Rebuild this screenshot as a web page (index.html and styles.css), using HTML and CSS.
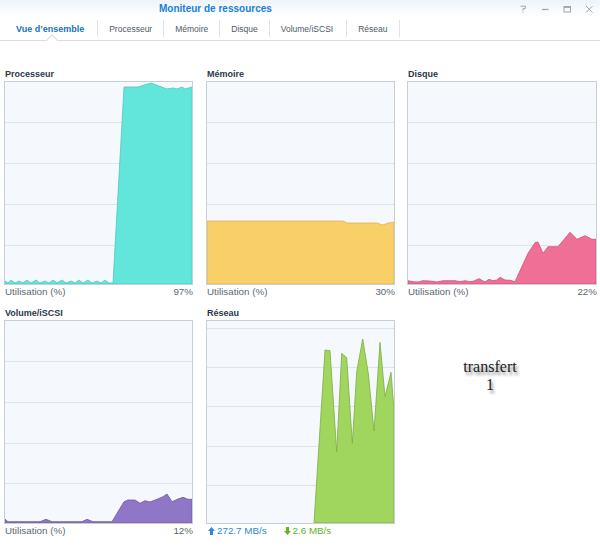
FILE: index.html
```html
<!DOCTYPE html>
<html lang="fr">
<head>
<meta charset="utf-8">
<title>Moniteur de ressources</title>
<link rel="stylesheet" href="styles.css">
</head>
<body>
<div class="window">
  <header class="titlebar">
    <div class="title">Moniteur de ressources</div>
    <div class="controls">
      <svg class="ctl" viewBox="0 0 8 8"><path d="M1.5 1.2 H6.3 V3.6 H4 V5.6 M4 6.6 V7.6" fill="none" stroke="currentColor" stroke-width="1"/></svg>
      <svg class="ctl" viewBox="0 0 8 8"><path d="M1 4.5 H7.5" stroke="currentColor" stroke-width="1.2"/></svg>
      <svg class="ctl" viewBox="0 0 8 8"><rect x="1" y="1.5" width="6.5" height="5.5" fill="none" stroke="currentColor" stroke-width="1"/><path d="M1 2.2 H7.5" stroke="currentColor" stroke-width="1.4"/></svg>
      <svg class="ctl" viewBox="0 0 8 8"><path d="M1 1 L7.5 7.5 M7.5 1 L1 7.5" stroke="currentColor" stroke-width="1"/></svg>
    </div>
  </header>

  <nav class="tabs">
    <span class="tab active">Vue d’ensemble</span>
    <span class="tab">Processeur</span>
    <span class="tab">Mémoire</span>
    <span class="tab">Disque</span>
    <span class="tab vol-tab">Volume/iSCSI</span>
    <span class="tab">Réseau</span>
  </nav>

  <main class="grid">
    <section class="panel">
      <h2 class="label">Processeur</h2>
      <div class="chart">
        <svg viewBox="0 0 187 202" preserveAspectRatio="none">
          <g class="grid-lines"><path d="M0 40.5H187M0 81.5H187M0 122.5H187M0 163.5H187"/></g>
          <path class="area cpu" d="M0,202 L0,199 L3,201 L6,198 L10,201 L14,199 L18,201 L22,198 L26,201 L31,198 L35,201 L40,199 L44,201 L48,198 L52,201 L57,198 L61,201 L66,199 L70,201 L74,198 L78,201 L83,198 L87,201 L92,199 L96,201 L100,198 L104,201 L108,201 L119,5 L133,5 L146,1 L162,7 L168,6 L172,7 L177,5 L180,7 L187,5 L187,202 Z"/>
        </svg>
      </div>
      <div class="foot"><span>Utilisation (%)</span><span>97%</span></div>
    </section>

    <section class="panel">
      <h2 class="label">Mémoire</h2>
      <div class="chart">
        <svg viewBox="0 0 187 202" preserveAspectRatio="none">
          <g class="grid-lines"><path d="M0 40.5H187M0 81.5H187M0 122.5H187M0 163.5H187"/></g>
          <path class="area mem" d="M0,202 L0,139 L136,139 L140,141 L170,141 L176,143 L181,141 L187,140 L187,202 Z"/>
        </svg>
      </div>
      <div class="foot"><span>Utilisation (%)</span><span>30%</span></div>
    </section>

    <section class="panel wide">
      <h2 class="label">Disque</h2>
      <div class="chart">
        <svg viewBox="0 0 188 202" preserveAspectRatio="none">
          <g class="grid-lines"><path d="M0 40.5H188M0 81.5H188M0 122.5H188M0 163.5H188"/></g>
          <path class="area disk" d="M0,202 L0,198.7 L5,199.7 L10,200 L15,198.7 L22,199 L29,200 L35,198.7 L47,198.7 L52,199.7 L57,198.7 L62,199.7 L65,199.3 L71,196.7 L77,200 L81,197.3 L85,198.7 L89,198 L92,195.3 L97,198 L102,198.3 L107,199.7 L120,171.3 L127,160.7 L130,160 L135,171.3 L140,164.7 L150,164.7 L162,150.3 L169,157.3 L177,153.7 L184,157.3 L188,157.3 L188,202 Z"/>
        </svg>
      </div>
      <div class="foot"><span>Utilisation (%)</span><span>22%</span></div>
    </section>

    <section class="panel">
      <h2 class="label">Volume/iSCSI</h2>
      <div class="chart">
        <svg viewBox="0 0 187 202" preserveAspectRatio="none">
          <g class="grid-lines"><path d="M0 40.5H187M0 81.5H187M0 122.5H187M0 162.5H187"/></g>
          <path class="area vol" d="M0,202 L0,198.3 L3,200.7 L35,200.7 L41,198.3 L47,200.7 L77,200.7 L82,198.3 L88,200.7 L107,200.7 L119,180.7 L123,179 L130,179 L135,182.3 L140,179.7 L145,181 L152,178.3 L158,175.7 L162,173 L167,180.7 L173,178 L178,176.3 L183,178.3 L187,178.3 L187,202 Z"/>
        </svg>
      </div>
      <div class="foot"><span>Utilisation (%)</span><span>12%</span></div>
    </section>

    <section class="panel">
      <h2 class="label">Réseau</h2>
      <div class="chart">
        <svg viewBox="0 0 187 202" preserveAspectRatio="none">
          <g class="grid-lines"><path d="M0 7.5H187M0 46.5H187M0 85.5H187M0 125.5H187M0 164.5H187"/></g>
          <path class="area net" d="M107,202 L118,29 L123,29.7 L129.7,130.7 L134.7,32.3 L139.7,36.7 L145.3,122.3 L149.7,50.7 L155.7,18 L161.3,52.3 L167,110 L173,21.3 L178,75.7 L184,51.3 L187,89 L187,202 Z"/>
        </svg>
      </div>
      <div class="foot net-foot">
        <span class="rate up"><svg class="arrow" viewBox="0 0 7 8"><polygon points="3.5,0 7,4 5,4 5,8 2,8 2,4 0,4"/></svg>272.7 MB/s</span>
        <span class="rate down"><svg class="arrow" viewBox="0 0 7 8"><polygon points="3.5,8 7,4 5,4 5,0 2,0 2,4 0,4"/></svg>2.6 MB/s</span>
      </div>
    </section>

    <div class="placeholder">transfert<br>1</div>
  </main>
</div>
</body>
</html>
```

FILE: styles.css
```css
* { box-sizing: border-box; }

html, body {
  margin: 0;
  padding: 0;
  background: #ffffff;
}

body {
  font-family: "Liberation Sans", Arial, sans-serif;
  color: #4b5561;
  width: 600px;
  height: 558px;
  overflow: hidden;
}

.window {
  width: 600px;
}

.titlebar {
  height: 17px;
  display: flex;
  align-items: center;
  justify-content: space-between;
  background: linear-gradient(#eef4fa, #ffffff);
}

.title {
  margin-left: 159px;
  font-size: 10px;
  font-weight: bold;
  color: #1b7fd6;
  line-height: 17px;
}

.controls {
  display: flex;
  gap: 14px;
  margin-right: 7px;
  color: #9aa5b1;
}

.ctl {
  width: 8px;
  height: 8px;
  display: block;
}

.tabs {
  display: flex;
  padding: 3px 0 3px 5px;
  border-bottom: 1px solid #d9dee4;
  height: 24px;
}

.tab {
  position: relative;
  display: flex;
  align-items: center;
  height: 17px;
  padding: 0 11px;
  border-right: 1px solid #dfe3e8;
  font-size: 8.5px;
  color: #4e5966;
  white-space: nowrap;
}

.tab.active {
  font-weight: bold;
  font-size: 9px;
  color: #1a72c6;
  padding-right: 13px;
}

.tab.vol-tab {
  padding-right: 13px;
}

.tab.active::after {
  content: "";
  position: absolute;
  left: 50%;
  bottom: -7px;
  width: 7px;
  height: 7px;
  margin-left: -3px;
  background: #ffffff;
  border-left: 1px solid #d9dee4;
  border-top: 1px solid #d9dee4;
  transform: rotate(45deg);
}

.grid {
  display: grid;
  grid-template-columns: 202px 201px 190px;
  row-gap: 8px;
  padding: 27px 0 0 4px;
}

.panel {
  width: 189px;
}

.panel.wide {
  width: 190px;
}

.label {
  margin: 0;
  font-size: 9px;
  font-weight: bold;
  line-height: 13px;
  color: #2c3849;
  padding-left: 1px;
}

.chart {
  height: 204px;
  border: 1px solid #c7ced7;
  background: #f5f9fd;
}

.chart svg {
  display: block;
  width: 100%;
  height: 100%;
}

.grid-lines path {
  stroke: #dde3ea;
  stroke-width: 1;
  fill: none;
}

.area {
  stroke-width: 0.8;
  stroke-linejoin: round;
}

.cpu { fill: #62e6dc; stroke: #52c6bd; }
.mem { fill: #f9cf68; stroke: #e0b452; }
.disk { fill: #f06f97; stroke: #cf5079; }
.vol { fill: #8f76c6; stroke: #6f56a6; }
.net { fill: #a1d65e; stroke: #7eab43; }

.foot {
  display: flex;
  justify-content: space-between;
  height: 14px;
  line-height: 14px;
  font-size: 9.8px;
  color: #5c6773;
  padding-left: 1px;
}

.net-foot {
  justify-content: flex-start;
  gap: 17px;
  padding-left: 2px;
}

.rate {
  display: flex;
  align-items: center;
  gap: 2px;
}

.rate.up { color: #2b88dc; }
.rate.down { color: #62b22a; }

.arrow {
  width: 7px;
  height: 8px;
  display: block;
  fill: currentColor;
}

.placeholder {
  padding: 51px 24px 0 0;
  text-align: center;
  font-family: "Liberation Serif", "Times New Roman", serif;
  font-size: 16px;
  line-height: 18px;
  color: #222222;
  text-shadow: 2px 3px 3px rgba(0, 0, 0, 0.45);
}
```
